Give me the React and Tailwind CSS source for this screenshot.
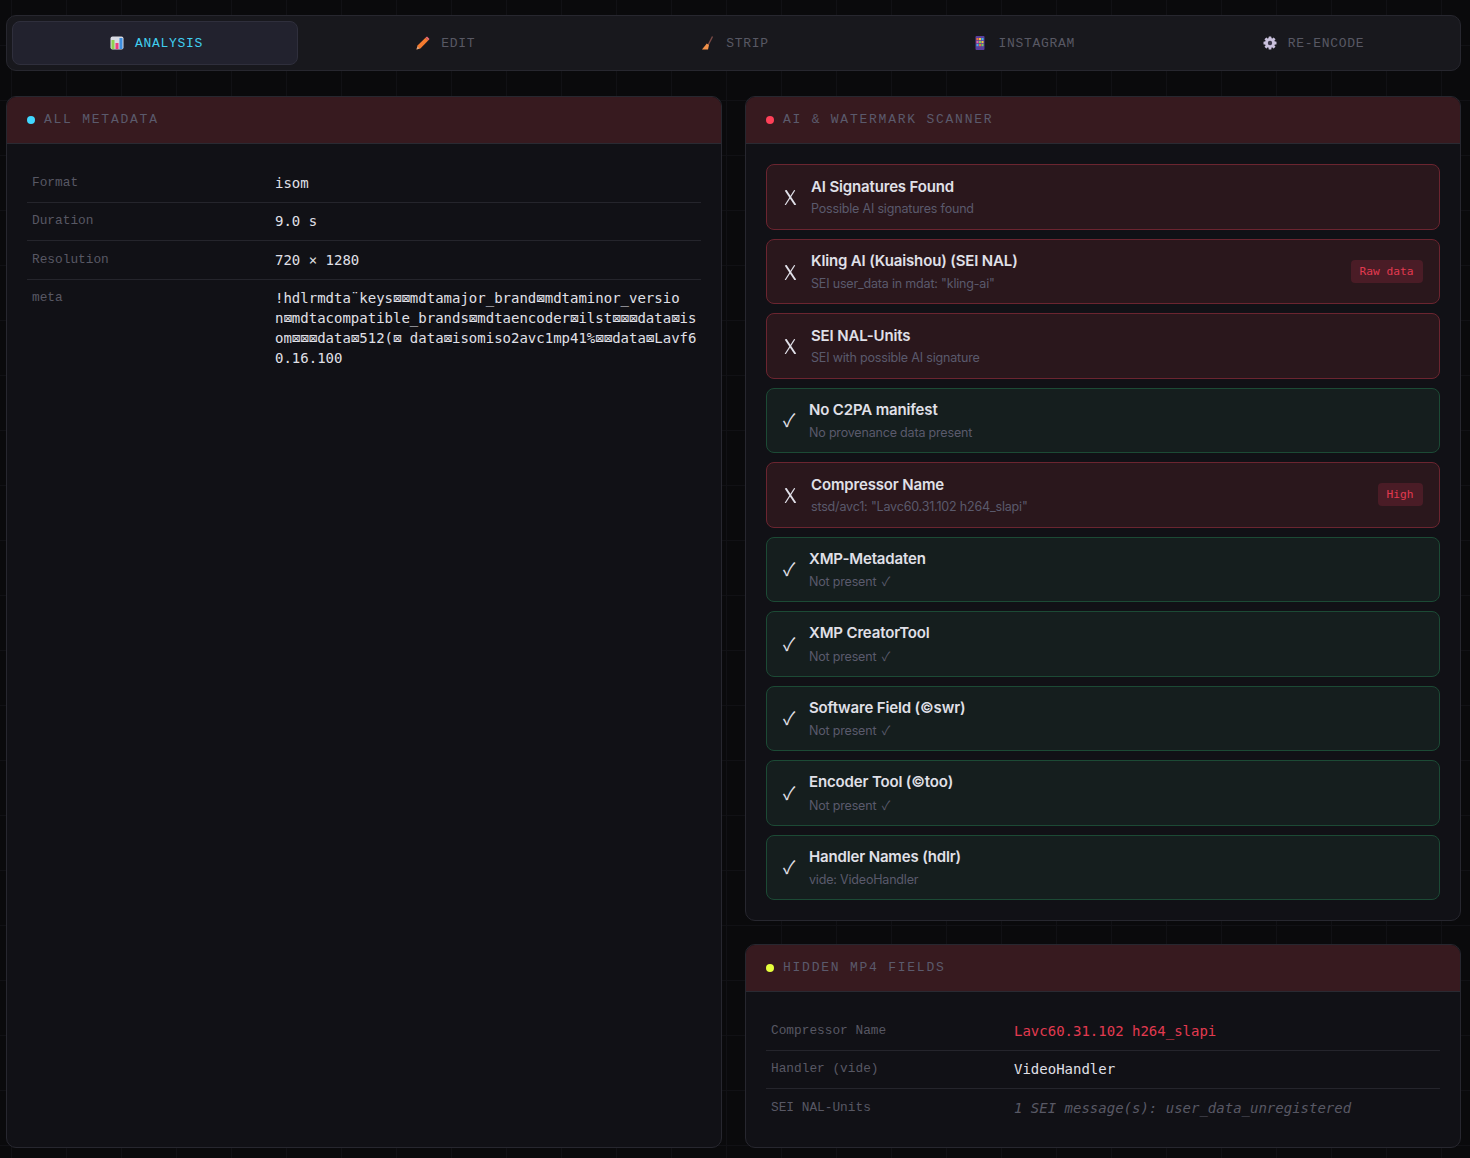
import React from "react";

const mono = "font-['DejaVu_Sans_Mono','Liberation_Mono',monospace]";
const narrow = "font-['Liberation_Mono','DejaVu_Sans_Mono',monospace]";
const sans = "font-['Inter','Noto_Sans',sans-serif]";
const sym = "font-['Noto_Sans_CJK_JP','DejaVu_Sans',sans-serif]";

const ChartIcon = () => (
  <svg width="14" height="14" viewBox="0 0 14 14">
    <rect x="0.5" y="0.5" width="13" height="13" rx="2" fill="#d9dbe4" />
    <rect x="1.5" y="4" width="3" height="9" fill="#8fd14f" />
    <rect x="5.5" y="7" width="3" height="6" fill="#ec3f7f" />
    <rect x="9.5" y="2" width="3" height="11" fill="#3f8fe0" />
  </svg>
);
const PencilIcon = () => (
  <svg width="14" height="14" viewBox="0 0 14 14">
    <path d="M0.5 13.5 L1.5 9.5 L9.5 1.8 L12.2 4.4 L4.4 12.5 Z" fill="#f47b2f" />
    <path d="M0.5 13.5 L1.5 10.5 L3.5 12.5 Z" fill="#c9a48c" />
    <path d="M9.5 1.8 L11 0.5 L13.5 3 L12.2 4.4 Z" fill="#ee6a72" />
  </svg>
);
const BroomIcon = () => (
  <svg width="14" height="14" viewBox="0 0 14 14">
    <path d="M11.5 0.5 L7.2 9" stroke="#7a4a46" strokeWidth="1.4" fill="none" />
    <path d="M5.8 7.6 L8 9 L7 13.4 L1 13.4 Z" fill="#f2914a" />
  </svg>
);
const PhoneIcon = () => (
  <svg width="14" height="14" viewBox="0 0 14 14">
    <rect x="2.5" y="0" width="9" height="14" rx="1" fill="#5b3f9c" />
    {[2, 5, 8].map((y, r) =>
      [3.5, 6, 8.5].map((x, c) => (
        <rect key={`${r}${c}`} x={x} y={y} width="2" height="2.2" fill={["#f0703a", "#f2c53c", "#45b0e6", "#e86a9a", "#7bd05a", "#f2c53c", "#45b0e6", "#f0703a", "#7bd05a"][r * 3 + c]} />
      ))
    )}
  </svg>
);
const GearIcon = () => (
  <svg width="14" height="14" viewBox="0 0 14 14">
    <g fill="#c9c0dc">
      <circle cx="7" cy="7" r="5" />
      {[0, 45, 90, 135].map((a) => (
        <rect key={a} x="5.6" y="0.5" width="2.8" height="13" rx="0.5" transform={`rotate(${a} 7 7)`} />
      ))}
    </g>
    <circle cx="7" cy="7" r="2.2" fill="#3a3648" />
  </svg>
);
const CrossIcon = () => (
  <svg width="16" height="15" viewBox="0 0 16 15" className="mr-[12px] shrink-0 translate-y-px">
    <path d="M2.6 0.2 L12.4 15" stroke="#e0e0e8" strokeWidth="1.9" fill="none" />
    <path d="M11.7 0.2 L2.2 15" stroke="#e0e0e8" strokeWidth="1.2" fill="none" />
  </svg>
);

const tabs = [
  { label: "ANALYSIS", Icon: ChartIcon, active: true },
  { label: "EDIT", Icon: PencilIcon },
  { label: "STRIP", Icon: BroomIcon },
  { label: "INSTAGRAM", Icon: PhoneIcon },
  { label: "RE-ENCODE", Icon: GearIcon },
];

const checks = [
  { bad: true, title: "AI Signatures Found", sub: "Possible AI signatures found" },
  { bad: true, title: "Kling AI (Kuaishou) (SEI NAL)", sub: 'SEI user_data in mdat: "kling-ai"', badge: "Raw data" },
  { bad: true, title: "SEI NAL-Units", sub: "SEI with possible AI signature" },
  { title: "No C2PA manifest", sub: "No provenance data present" },
  { bad: true, title: "Compressor Name", sub: 'stsd/avc1: "Lavc60.31.102 h264_slapi"', badge: "High" },
  { title: "XMP-Metadaten", sub: "Not present ✓" },
  { title: "XMP CreatorTool", sub: "Not present ✓" },
  { title: "Software Field (©swr)", sub: "Not present ✓" },
  { title: "Encoder Tool (©too)", sub: "Not present ✓" },
  { title: "Handler Names (hdlr)", sub: "vide: VideoHandler" },
];

function Panel({ dot, title, children }) {
  return (
    <section className="flex flex-col rounded-[10px] border border-[#27272f] bg-[#111116] overflow-hidden">
      <header className="flex h-[47px] shrink-0 items-center gap-[9px] border-b border-[#2a2a32] bg-[#371a1f] px-5">
        <span className={`h-2 w-2 rounded-full ${dot}`} />
        <h2 className={`${narrow} -translate-y-px text-[13px] leading-none tracking-[1.76px] text-[#5b5a6c]`}>{title}</h2>
      </header>
      <div className="flex-1 p-5">{children}</div>
    </section>
  );
}

function Row({ label, last, children, valueClass = "text-[#e0e0e8]" }) {
  return (
    <div className={`flex pl-[5px] pr-[5px] pt-[8.6px] pb-[9px] ${last ? "" : "border-b border-[#25252c]"}`}>
      <div className={`${narrow} w-[243px] shrink-0 text-[12.8px] leading-[20px] text-[#585864]`}>{label}</div>
      <div className={`${mono} min-w-0 flex-1 whitespace-nowrap text-[14px] leading-[20px] ${valueClass}`}>{children}</div>
    </div>
  );
}

function Check({ bad, title, sub, badge }) {
  return (
    <div className={`flex h-[65.5px] items-center rounded-lg border pl-4 pr-4 ${bad ? "border-[#6b2530] bg-[#2a171c]" : "border-[#1c4a35] bg-[#151e1e]"}`}>
      {bad ? (
        <CrossIcon />
      ) : (
        <span className={`${sym} mr-[12px] w-[14px] -translate-y-px text-[18px] leading-none text-[#e0e0e8]`}>✓</span>
      )}
      <div className="min-w-0 flex-1 -translate-y-[0.5px]">
        <div className={`${sans} text-[15px] font-semibold leading-[22px] tracking-[-0.15px] text-[#e0e0e8]`}>{title}</div>
        <div className={`${sans} mt-[2.5px] text-[12.5px] leading-[18px] tracking-[-0.18px] text-[#5a5a6c]`}>
          {sub.endsWith("✓") ? (
            <>
              {sub.slice(0, -1)}
              <span className={`${sym} ml-[2px]`}>✓</span>
            </>
          ) : (
            sub
          )}
        </div>
      </div>
      {badge && (
        <span className={`${mono} rounded bg-[#4a1c26] pl-[9px] pr-[9.5px] py-[3px] text-[11.2px] leading-[17px] text-[#e23a50]`}>{badge}</span>
      )}
    </div>
  );
}

export default function App() {
  return (
    <div className="min-h-[1158px] bg-[#0a0a0c] bg-[linear-gradient(#111115_1px,transparent_1px),linear-gradient(90deg,#111115_1px,transparent_1px)] bg-[size:55px_55px] bg-[position:11px_45px] pl-[6px] pr-[9px] pt-[15px] pb-[10px]">
      <nav className="flex gap-[3px] rounded-[10px] border border-[#27272f] bg-[#18181d] p-[5px]">
        {tabs.map(({ label, Icon, active }) => (
          <button
            key={label}
            className={`flex h-[44px] flex-1 items-center justify-center gap-[11px] rounded-lg border pl-[3px] ${active ? "border-[#2f2f3c] bg-[#22222e] text-[#40cff0]" : "border-transparent text-[#585864]"}`}
          >
            <Icon />
            <span className={`${narrow} text-[13px] leading-none tracking-[0.7px]`}>{label}</span>
          </button>
        ))}
      </nav>

      <main className="mt-[25px] grid grid-cols-2 gap-[23px]">
        <Panel dot="bg-[#40d8ff]" title="ALL METADATA">
          <Row label="Format">isom</Row>
          <Row label="Duration">9.0 s</Row>
          <Row label="Resolution">720 × 1280</Row>
          <Row label="meta" last>
            !hdlrmdta¨keys⊠⊠mdtamajor_brand⊠mdtaminor_versio
            <br />
            n⊠mdtacompatible_brands⊠mdtaencoder⊠ilst⊠⊠⊠data⊠is
            <br />
            om⊠⊠⊠data⊠512(⊠ data⊠isomiso2avc1mp41%⊠⊠data⊠Lavf6
            <br />
            0.16.100
          </Row>
        </Panel>

        <div className="flex flex-col gap-[23px]">
          <Panel dot="bg-[#ff4058]" title="AI & WATERMARK SCANNER">
            <div className="flex flex-col gap-[9px]">
              {checks.map((c) => (
                <Check key={c.title} {...c} />
              ))}
            </div>
          </Panel>
          <Panel dot="bg-[#e6ff3c]" title="HIDDEN MP4 FIELDS">
            <Row label="Compressor Name" valueClass="text-[#e23a50]">Lavc60.31.102 h264_slapi</Row>
            <Row label="Handler (vide)">VideoHandler</Row>
            <Row label="SEI NAL-Units" last valueClass="italic text-[#585864]">1 SEI message(s): user_data_unregistered</Row>
          </Panel>
        </div>
      </main>
    </div>
  );
}
